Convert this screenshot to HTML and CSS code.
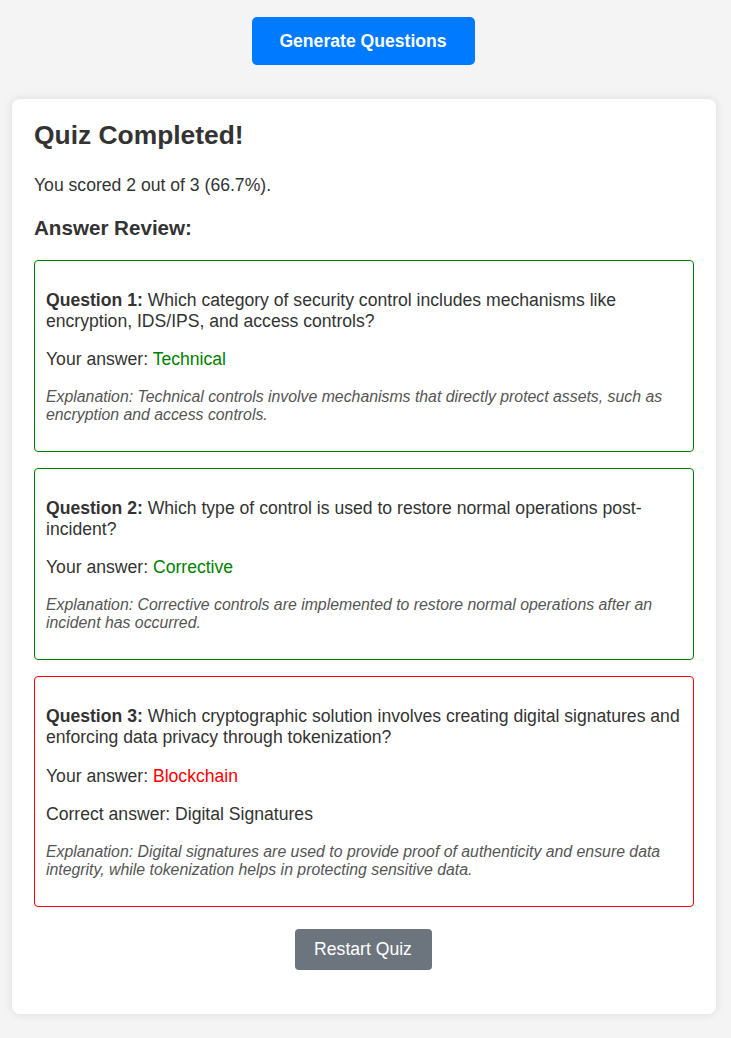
FILE: index.html
```html
<!DOCTYPE html>
<html lang="en">
<head>
<meta charset="utf-8">
<title>Quiz</title>
<link rel="stylesheet" href="styles.css">
</head>
<body>
<div class="top">
  <button class="btn-generate">Generate Questions</button>
</div>
<div class="card">
  <h2 class="title">Quiz Completed!</h2>
  <p class="score">You scored 2 out of 3 (66.7%).</p>
  <h3 class="review">Answer Review:</h3>

  <div class="item correct">
    <p><strong>Question 1:</strong> Which category of security control includes mechanisms like encryption, IDS/IPS, and access controls?</p>
    <p>Your answer: <span class="ans-ok">Technical</span></p>
    <p class="expl">Explanation: Technical controls involve mechanisms that directly protect assets, such as encryption and access controls.</p>
  </div>

  <div class="item correct">
    <p><strong>Question 2:</strong> Which type of control is used to restore normal operations post-incident?</p>
    <p>Your answer: <span class="ans-ok">Corrective</span></p>
    <p class="expl">Explanation: Corrective controls are implemented to restore normal operations after an incident has occurred.</p>
  </div>

  <div class="item wrong">
    <p><strong>Question 3:</strong> Which cryptographic solution involves creating digital signatures and enforcing data privacy through tokenization?</p>
    <p>Your answer: <span class="ans-bad">Blockchain</span></p>
    <p>Correct answer: Digital Signatures</p>
    <p class="expl">Explanation: Digital signatures are used to provide proof of authenticity and ensure data integrity, while tokenization helps in protecting sensitive data.</p>
  </div>

  <div class="actions">
    <button class="btn-restart">Restart Quiz</button>
  </div>
</div>
</body>
</html>
```

FILE: styles.css
```css
* { box-sizing: border-box; }
html { background: #f4f4f4; }
body {
  margin: 0;
  padding: 17px 15px 24px 12px;
  background: #f4f4f4;
  font-family: "Liberation Sans", Arial, sans-serif;
  font-size: 17.6px;
  color: #333;
  line-height: normal;
}
.top {
  display: flex;
  justify-content: center;
  margin-bottom: 34px;
  padding-right: 2px;
}
.btn-generate {
  width: 223px;
  height: 48px;
  background: #007bff;
  color: #fff;
  border: none;
  border-radius: 5px;
  font-family: "Liberation Sans", Arial, sans-serif;
  font-size: 17.6px;
  font-weight: bold;
}
.card {
  background: #fff;
  border-radius: 8px;
  box-shadow: 0 0 10px rgba(0,0,0,0.1);
  padding: 21px 22px 22px;
}
.title {
  font-size: 26.4px;
  margin: 0 0 24px;
}
.score {
  font-size: 17.6px;
  margin: 0 0 20px;
}
.review {
  font-size: 20.6px;
  margin: 0 0 20px;
}
.item {
  border: 1px solid;
  border-radius: 4px;
  padding: 11px 11px;
  margin-bottom: 16px;
}
.item.correct { border-color: #008000; }
.item.wrong { border-color: #ff0000; }
.item p { margin: 17.6px 0; }
.ans-ok { color: #008000; }
.ans-bad { color: #ff0000; }
.item p.expl {
  font-size: 15.84px;
  font-style: italic;
  color: #555;
  margin-top: 18px;
  margin-bottom: 16px;
}
.actions {
  display: flex;
  justify-content: center;
  padding-top: 5.5px;
  padding-bottom: 22px;
  padding-right: 2px;
}
.btn-restart {
  width: 137px;
  height: 41px;
  background: #6c757d;
  color: #fff;
  border: none;
  border-radius: 4px;
  font-family: "Liberation Sans", Arial, sans-serif;
  font-size: 17.6px;
}
```
